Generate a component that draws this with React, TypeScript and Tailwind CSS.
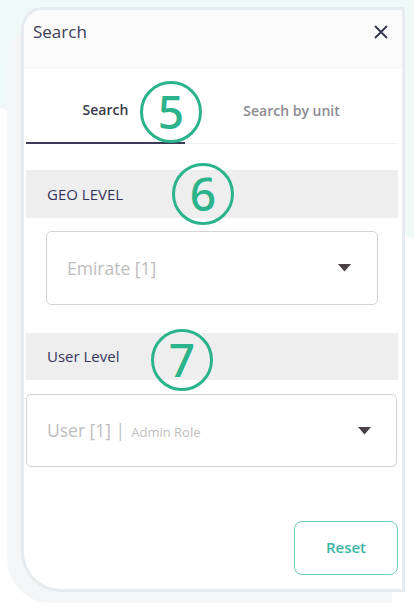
import React from "react";

const font = { fontFamily: '"Open Sans", "Noto Sans", Arial, sans-serif' };

function Caret() {
  return (
    <svg width="13" height="8" viewBox="0 0 13 8">
      <polygon points="0,0 13,0 6.5,7.5" fill="#4a4048" />
    </svg>
  );
}

function Badge({ n }: { n: string }) {
  return (
    <div className="w-[62px] h-[62px] rounded-full border-[3px] border-[#2bb38b] bg-transparent flex items-center justify-center text-[46px] font-medium leading-none text-[#2bb38b]" style={{ fontFamily: '"Noto Sans", "Open Sans", Arial, sans-serif' }}>
      <span className="-mt-[3px]">{n}</span>
    </div>
  );
}

export default function App() {
  return (
    <div className="relative w-[414px] h-[615px] overflow-hidden bg-white" style={font}>
      <svg className="absolute inset-0" width="414" height="615" viewBox="0 0 414 615">
        <polygon points="0,0 414,0 414,238 0,108" fill="#eef8f7" />
      </svg>
      <div className="absolute left-[7px] top-[20px] w-[385px] h-[583px] bg-[#f4f5f6] rounded-tl-[44px] rounded-bl-[44px]" />

      <div className="relative pt-[7px] pl-[21px]">
        <div className="w-[384px] h-[585px] border-[3px] border-[#e6ebf0] rounded-tl-[22px] rounded-bl-[40px] bg-white overflow-hidden flex flex-col">
          <div className="h-[57px] bg-[#fbfbfb] shadow-[0_1px_2px_rgba(0,0,0,0.05)] flex justify-between items-start pt-[11px] pl-[9px] pr-[14px] relative">
            <span className="text-[17px] leading-[22px] text-[#3c3c5a]">Search</span>
            <svg width="14" height="14" viewBox="0 0 14 14" className="mt-[4px]">
              <path d="M1.5 1.5 L12.5 12.5 M12.5 1.5 L1.5 12.5" stroke="#33334d" strokeWidth="1.8" strokeLinecap="round" />
            </svg>
          </div>

          <div className="pl-[2px] pr-[4px] flex flex-col flex-1">
            <div className="flex h-[77px] border-b border-[#eef0f3]">
              <div className="relative w-[159px] flex items-center justify-center border-b-2 border-[#3b3a58] -mb-px">
                <span className="text-[14px] font-semibold text-[#3a3a48] mt-[10px]">Search</span>
                <div className="absolute left-[114px] top-[14px]">
                  <Badge n="5" />
                </div>
              </div>
              <div className="flex-1 flex items-center justify-center">
                <span className="text-[14px] font-semibold text-[#8a8a92] mt-[10px]">Search by unit</span>
              </div>
            </div>

            <div className="relative mt-[26px] h-[48px] bg-[#eeeeee] flex items-center pl-[21px]">
              <span className="text-[15px] text-[#35355a] font-medium">GEO LEVEL</span>
              <div className="absolute left-[146px] top-[-7px]">
                <Badge n="6" />
              </div>
            </div>

            <div className="mt-[13px] mx-[20px] h-[74px] border border-[#d3d3d3] rounded-[5px] flex items-center justify-between pl-[20px] pr-[26px]">
              <span className="text-[17.5px] text-[#bdbdbd]">Emirate [1]</span>
              <Caret />
            </div>

            <div className="relative mt-[28px] h-[47px] bg-[#eeeeee] flex items-center pl-[21px]">
              <span className="text-[15px] text-[#35355a] font-medium">User Level</span>
              <div className="absolute left-[125px] top-[-4px]">
                <Badge n="7" />
              </div>
            </div>

            <div className="mt-[14px] mr-[1px] h-[73px] border border-[#d3d3d3] rounded-[5px] flex items-center justify-between pl-[20px] pr-[25px]">
              <span className="text-[#bdbdbd] flex items-baseline">
                <span className="text-[17.5px]">User [1] |</span>
                <span className="text-[13px] font-medium ml-[6px]">Admin Role</span>
              </span>
              <Caret />
            </div>

            <div className="mt-[54px] flex justify-end">
              <button className="w-[104px] h-[54px] border-[1.5px] border-[#70ccbf] rounded-[8px] text-[15px] font-semibold text-[#3ab5a5] bg-white pb-[2px]">
                Reset
              </button>
            </div>
          </div>
        </div>
      </div>
    </div>
  );
}
